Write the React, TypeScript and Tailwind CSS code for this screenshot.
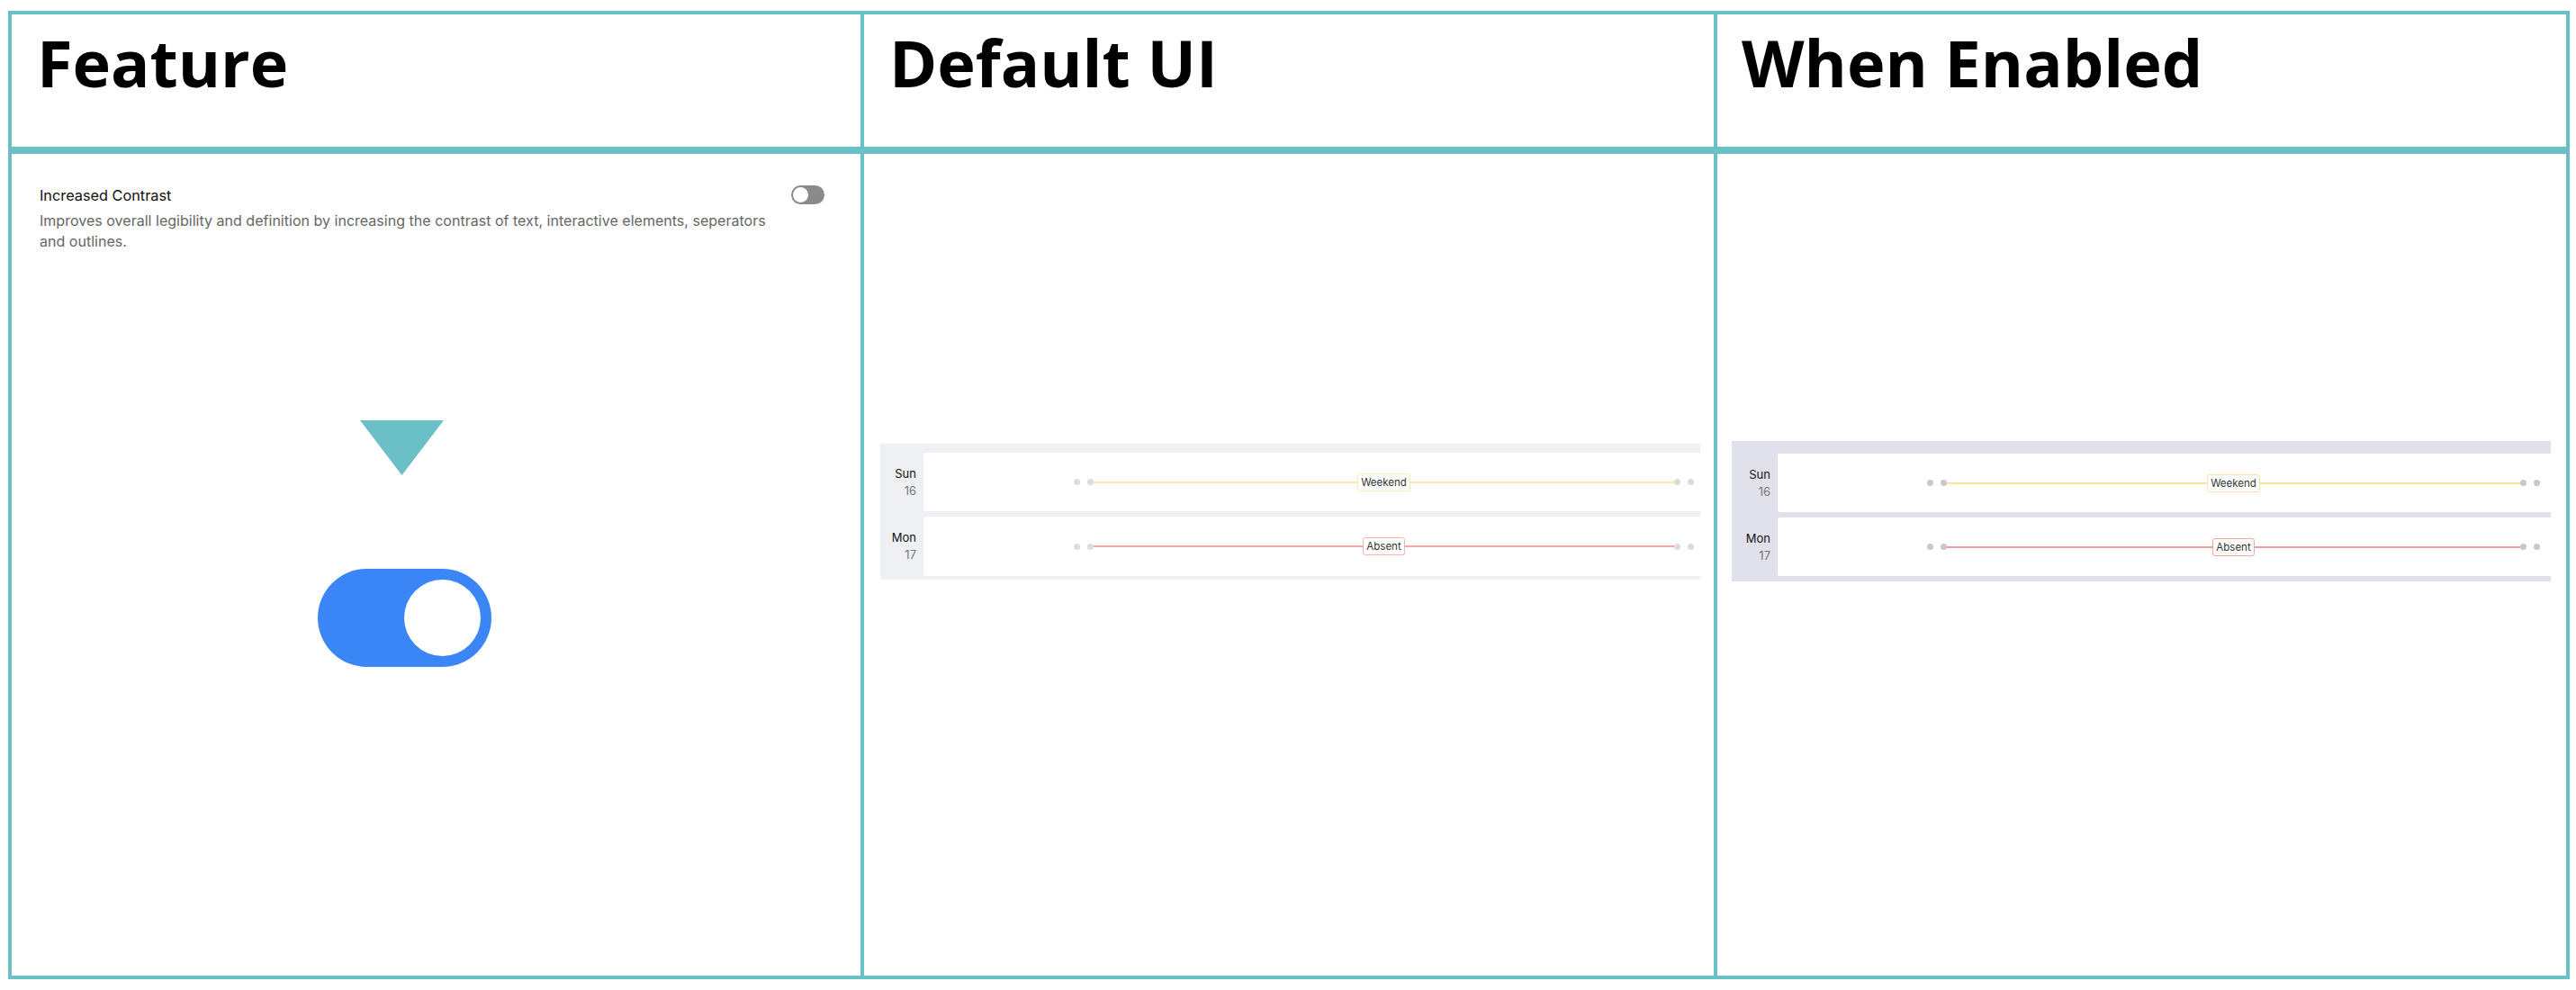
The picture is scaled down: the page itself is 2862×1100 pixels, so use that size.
const BODY_FONT = "font-['Inter','Liberation_Sans',sans-serif]";

type DayRowProps = {
  day: string;
  date: string;
  label: string;
  pillClass: string;
  lineClass: string;
  dotClass: string;
  rowClass: string;
  labelWidth: string;
};

function Dot({ className }: { className: string }) {
  return <span className={`h-[7px] w-[7px] shrink-0 rounded-full ${className}`} />;
}

function DayRow({ day, date, label, pillClass, lineClass, dotClass, rowClass, labelWidth }: DayRowProps) {
  return (
    <div className="flex h-full items-stretch">
      <div className={`flex shrink-0 flex-col items-end justify-center gap-[2px] pr-2 ${labelWidth}`}>
        <span className="text-[13px] leading-[17px] text-[#111]">{day}</span>
        <span className="text-[13px] leading-[17px] text-[#777]">{date}</span>
      </div>
      <div className={`flex flex-1 items-center rounded-l-[3px] bg-white ${rowClass}`}>
        <Dot className={dotClass} />
        <Dot className={`ml-2 ${dotClass}`} />
        <div className={`h-[2px] flex-1 ${lineClass}`} />
        <span className={`rounded-[3px] border bg-white px-[3px] text-[11.5px] leading-[18px] text-[#333] ${pillClass}`}>
          {label}
        </span>
        <div className={`h-[2px] flex-1 ${lineClass}`} />
        <Dot className={dotClass} />
        <Dot className={`ml-2 ${dotClass}`} />
      </div>
    </div>
  );
}

function DefaultPreview() {
  const row = "pl-[167px] pr-[7px]";
  const dot = "bg-[#dcdcdc]";
  const labelWidth = "w-[48px]";
  return (
    <div className={`flex h-[151px] w-[911px] flex-col bg-[#eef0f4] pt-[10px] ${BODY_FONT}`}>
      <div className="h-[65px]">
        <DayRow day="Sun" date="16" label="Weekend" pillClass="border-[#fde9b8]" lineClass="bg-[#fde8b4]" dotClass={dot} rowClass={row} labelWidth={labelWidth} />
      </div>
      <div className="mt-[6px] h-[66px]">
        <DayRow day="Mon" date="17" label="Absent" pillClass="border-[#f5b5b5]" lineClass="bg-[#f3a9a9]" dotClass={dot} rowClass={row} labelWidth={labelWidth} />
      </div>
    </div>
  );
}

function EnabledPreview() {
  const row = "pl-[166px] pr-[12px]";
  const dot = "bg-[#c8c8c8]";
  const labelWidth = "w-[51px]";
  return (
    <div className={`flex h-[156px] w-[910px] flex-col bg-[#e1e1eb] pt-[14px] ${BODY_FONT}`}>
      <div className="h-[65px]">
        <DayRow day="Sun" date="16" label="Weekend" pillClass="border-[#fde3a6]" lineClass="bg-[#fde2a0]" dotClass={dot} rowClass={row} labelWidth={labelWidth} />
      </div>
      <div className="mt-[6px] h-[65px]">
        <DayRow day="Mon" date="17" label="Absent" pillClass="border-[#f0a5a5]" lineClass="bg-[#ee9f9f]" dotClass={dot} rowClass={row} labelWidth={labelWidth} />
      </div>
    </div>
  );
}

function FeatureCell() {
  return (
    <div className={`flex h-full flex-col pt-[36px] pl-[31px] ${BODY_FONT}`}>
      <div className="flex w-[872px] items-start justify-between">
        <div className="w-[825px]">
          <div className="text-[16.3px] leading-[20px] text-[#111]">Increased Contrast</div>
          <p className="mt-[7px] text-[16px] leading-[23px] tracking-[0.02px] text-[#666]">
            Improves overall legibility and definition by increasing the contrast of text, interactive elements, seperators and outlines.
          </p>
        </div>
        <div className="-mt-[1px] flex h-[21px] w-[37px] items-center rounded-full bg-[#8a8a8a] pl-[2px]">
          <span className="h-[17px] w-[17px] rounded-full bg-white" />
        </div>
      </div>
      <svg className="mt-[187px] ml-[356px] shrink-0" width="93" height="61" viewBox="0 0 93 61">
        <path d="M0 0H93L46.5 61Z" fill="#6bc0c7" />
      </svg>
      <div className="mt-[104px] ml-[309px] flex h-[109px] w-[193px] items-center justify-end rounded-full bg-[#3b86f7] pr-[12px] blur-[0.6px]">
        <span className="h-[85px] w-[85px] rounded-full bg-white" />
      </div>
    </div>
  );
}

function HeaderCell({ title, className }: { title: string; className: string }) {
  return (
    <div className={`flex h-full items-start pt-[13px] font-['Open_Sans',sans-serif] text-[72px] leading-[80px] font-bold text-black ${className}`}>
      {title}
    </div>
  );
}

export default function App() {
  return (
    <div className="h-[1100px] w-[2862px] bg-white pt-[12px] pl-[9px]">
      <div className="flex h-[1076px] w-[2846px] flex-col border-4 border-[#6bc0c7]">
        <div className="grid h-[155px] shrink-0 grid-cols-[947px_948px_943px] border-b-8 border-[#6bc0c7]">
          <div className="border-r-4 border-[#6bc0c7]">
            <HeaderCell title="Feature" className="pl-[28px]" />
          </div>
          <div className="border-r-4 border-[#6bc0c7]">
            <HeaderCell title="Default UI" className="pl-[28px]" />
          </div>
          <HeaderCell title="When Enabled" className="pl-[27px]" />
        </div>
        <div className="grid min-h-0 flex-1 grid-cols-[947px_948px_943px]">
          <div className="border-r-4 border-[#6bc0c7]">
            <FeatureCell />
          </div>
          <div className="border-r-4 border-[#6bc0c7] pt-[322px] pl-[18px]">
            <DefaultPreview />
          </div>
          <div className="pt-[319px] pl-[16px]">
            <EnabledPreview />
          </div>
        </div>
      </div>
    </div>
  );
}
